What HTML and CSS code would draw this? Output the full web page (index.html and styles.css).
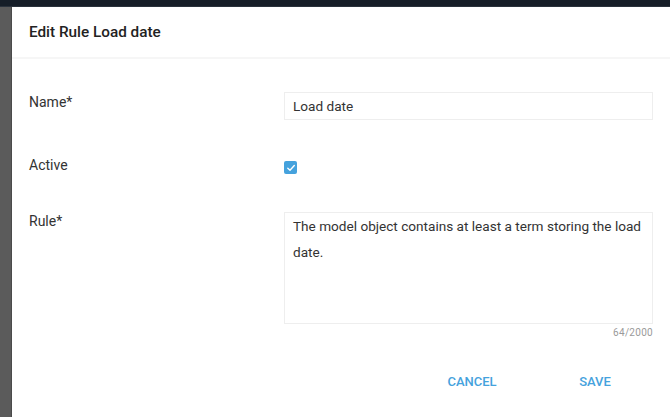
FILE: index.html
```html
<!DOCTYPE html>
<html>
<head>
<meta charset="utf-8">
<link rel="stylesheet" href="styles.css">
</head>
<body>
<div class="topbar"></div>
<div class="main">
  <div class="backdrop"></div>
  <div class="dialog">
    <div class="dialog-header">Edit Rule Load date</div>
    <div class="dialog-body">
      <div class="row row-name">
        <div class="label">Name*</div>
        <div class="field"><div class="input">Load date</div></div>
      </div>
      <div class="row row-active">
        <div class="label">Active</div>
        <div class="field">
          <span class="checkbox">
            <svg width="10" height="10" viewBox="0 0 10 10"><path d="M1.8 5.2 L4 7.2 L8.3 2.6" fill="none" stroke="#fff" stroke-width="1.4" stroke-linecap="round" stroke-linejoin="round"/></svg>
          </span>
        </div>
      </div>
      <div class="row row-rule">
        <div class="label">Rule*</div>
        <div class="field">
          <div class="textarea">The model object contains at least a term storing the load date.</div>
          <div class="counter">64/2000</div>
        </div>
      </div>
    </div>
    <div class="actions">
      <button class="btn btn-cancel">CANCEL</button>
      <button class="btn btn-save">SAVE</button>
    </div>
  </div>
</div>
</body>
</html>
```
FILE: styles.css
```css
html, body {
  margin: 0;
  padding: 0;
  height: 100%;
}
body {
  display: flex;
  flex-direction: column;
  font-family: Roboto, "Liberation Sans", sans-serif;
  color: #333;
  background: #fff;
  overflow: hidden;
}
.topbar {
  height: 6px;
  background: #161e28;
  border-bottom: 1px solid #2a323c;
  flex: none;
}
.main {
  flex: 1;
  display: flex;
}
.backdrop {
  width: 11px;
  background: #5b5b5b;
  border-right: 1px solid #4a4a4a;
  flex: none;
}
.dialog {
  flex: 1;
  background: #fff;
  display: flex;
  flex-direction: column;
}
.dialog-header {
  height: 50px;
  padding-left: 17px;
  display: flex;
  align-items: center;
  font-size: 15.3px;
  font-weight: 500;
  color: #222;
  border-bottom: 2px solid #f6f6f6;
}
.dialog-body {
  padding: 33px 17px 0 17px;
}
.row {
  display: flex;
}
.label {
  width: 255px;
  flex: none;
  font-size: 14px;
  line-height: 18px;
  padding-top: 1px;
  color: #333;
}
.field {
  flex: 1;
}
.input {
  height: 26px;
  border: 1px solid #eeeeee;
  padding-left: 8px;
  font-size: 13.6px;
  line-height: 26px;
  color: #333;
}
.row-active {
  margin-top: 35px;
}
.checkbox {
  display: inline-flex;
  align-items: center;
  justify-content: center;
  width: 13px;
  height: 13px;
  margin-top: 6px;
  border-radius: 2px;
  background: #45a2dd;
}
.row-rule {
  margin-top: 35px;
}
.row-rule .label {
  padding-top: 0;
}
.textarea {
  height: 110px;
  border: 1px solid #eeeeee;
  padding: 0 8px;
  font-size: 13.6px;
  line-height: 26px;
  color: #333;
}
.counter {
  text-align: right;
  font-size: 10px;
  color: #9a9a9a;
  margin-top: 3px;
  letter-spacing: 0.3px;
}
.actions {
  display: flex;
  justify-content: flex-end;
  gap: 35px;
  padding: 34px 31px 0 0;
}
.btn {
  background: none;
  border: none;
  min-width: 88px;
  padding: 0 8px;
  font-family: Roboto, "Liberation Sans", sans-serif;
  font-size: 13px;
  font-weight: 500;
  color: #45a2dd;
  height: 20px;
}
```
